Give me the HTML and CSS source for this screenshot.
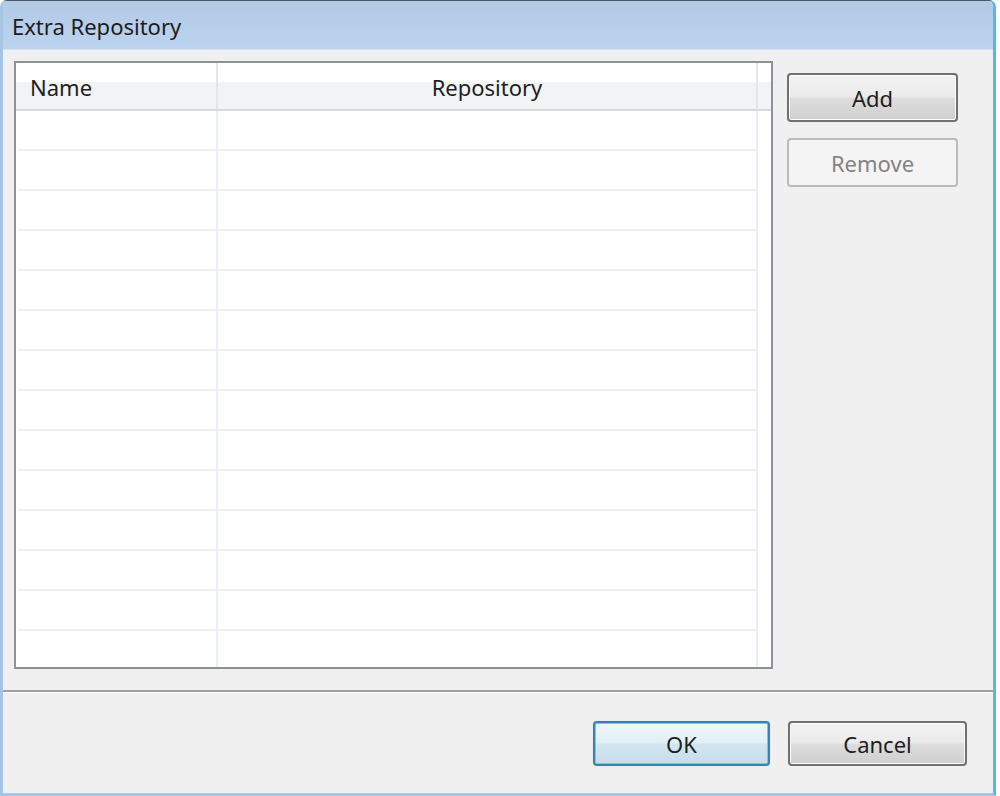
FILE: index.html
```html
<!DOCTYPE html>
<html>
<head>
<meta charset="utf-8">
<link rel="stylesheet" href="styles.css">
</head>
<body>
<div class="window">
  <div class="titlebar">Extra Repository</div>
  <div class="client">
    <div class="main">
      <div class="table">
        <div class="thead">
          <div class="th th-name">Name</div>
          <div class="th th-repo">Repository</div>
          <div class="th th-fill"></div>
        </div>
        <div class="tbody">
          <div class="row"><div class="td c1"></div><div class="td c2"></div><div class="td c3"></div></div>
          <div class="row"><div class="td c1"></div><div class="td c2"></div><div class="td c3"></div></div>
          <div class="row"><div class="td c1"></div><div class="td c2"></div><div class="td c3"></div></div>
          <div class="row"><div class="td c1"></div><div class="td c2"></div><div class="td c3"></div></div>
          <div class="row"><div class="td c1"></div><div class="td c2"></div><div class="td c3"></div></div>
          <div class="row"><div class="td c1"></div><div class="td c2"></div><div class="td c3"></div></div>
          <div class="row"><div class="td c1"></div><div class="td c2"></div><div class="td c3"></div></div>
          <div class="row"><div class="td c1"></div><div class="td c2"></div><div class="td c3"></div></div>
          <div class="row"><div class="td c1"></div><div class="td c2"></div><div class="td c3"></div></div>
          <div class="row"><div class="td c1"></div><div class="td c2"></div><div class="td c3"></div></div>
          <div class="row"><div class="td c1"></div><div class="td c2"></div><div class="td c3"></div></div>
          <div class="row"><div class="td c1"></div><div class="td c2"></div><div class="td c3"></div></div>
          <div class="row"><div class="td c1"></div><div class="td c2"></div><div class="td c3"></div></div>
          <div class="row last"><div class="td c1"></div><div class="td c2"></div><div class="td c3"></div></div>
        </div>
      </div>
      <div class="side">
        <button class="btn btn-side">Add</button>
        <button class="btn btn-side disabled">Remove</button>
      </div>
    </div>
    <div class="separator"></div>
    <div class="footer">
      <button class="btn btn-foot default">OK</button>
      <button class="btn btn-foot">Cancel</button>
    </div>
  </div>
</div>
</body>
</html>
```

FILE: styles.css
```css
html, body {
  margin: 0;
  padding: 0;
  background: #ffffff;
}
body {
  font-family: "Noto Sans", "Open Sans", sans-serif;
  color: #1e1e1e;
  width: 1000px;
  height: 796px;
  overflow: hidden;
}
.window {
  box-sizing: border-box;
  width: 996px;
  height: 796px;
  border-top: 1px solid #4a5866;
  border-left: 3px solid #a7c4e4;
  border-right: 3px solid #4cbce6;
  border-bottom: 3px solid #a7c4e4;
  border-radius: 7px 7px 0 0;
  display: flex;
  flex-direction: column;
  background: #f0f0f0;
  overflow: hidden;
}
.titlebar {
  height: 48px;
  flex: none;
  background: linear-gradient(#b2cae6, #bcd3ee);
  font-size: 22px;
  line-height: 50px;
  padding-left: 9px;
  color: #1c1c1c;
  border-bottom: 1px solid #d6e2ef;
}
.client {
  flex: 1;
  display: flex;
  flex-direction: column;
  background: #f0f0f0;
}
.main {
  display: flex;
  padding: 11px 0 0 11px;
  gap: 14px;
}
.table {
  box-sizing: border-box;
  width: 759px;
  height: 608px;
  border: 2px solid #8e9298;
  background: #ffffff;
  display: flex;
  flex-direction: column;
  overflow: hidden;
}
.thead {
  display: flex;
  height: 46px;
  flex: none;
  background: linear-gradient(#ffffff 0, #ffffff 42%, #f2f3f5 42%, #f2f3f5 100%);
  border-bottom: 2px solid #d8d9db;
}
.th {
  font-size: 22px;
  line-height: 48px;
  box-sizing: border-box;
}
.th-name {
  width: 202px;
  padding-left: 14px;
  border-right: 2px solid #e4e5e7;
}
.th-repo {
  width: 540px;
  text-align: center;
  border-right: 2px solid #e4e5e7;
}
.th-fill {
  flex: 1;
}
.tbody {
  flex: 1;
  display: flex;
  flex-direction: column;
}
.row {
  display: flex;
  height: 40px;
  flex: none;
}
.td {
  box-sizing: border-box;
  height: 40px;
  border-bottom: 2px solid #f0f0f0;
}
.c1 {
  border-right: 2px solid #e8eef8;
  margin-left: 2px;
  width: 200px;
}
.c2 {
  width: 540px;
  border-right: 2px solid #e8eef8;
}
.c3 {
  flex: 1;
  border-bottom: none;
}
.row.last .td {
  border-bottom: none;
}
.side {
  display: flex;
  flex-direction: column;
  padding-top: 12px;
  gap: 16px;
}
.btn {
  box-sizing: border-box;
  font-family: "Noto Sans", "Open Sans", sans-serif;
  font-size: 22px;
  color: #1e1e1e;
  border: 2px solid #707070;
  border-radius: 4px;
  background: linear-gradient(#f2f2f2 0, #ebebeb 48%, #dddddd 52%, #cfcfcf 100%);
  box-shadow: inset 0 0 0 1px #fcfcfc;
  padding: 0;
  margin: 0;
}
.btn-side {
  width: 171px;
  height: 49px;
}
.btn.disabled {
  border-color: #b8bcbf;
  background: #f4f4f4;
  color: #838383;
  box-shadow: none;
}
.separator {
  margin-top: 21px;
  height: 2px;
  background: #a0a0a0;
  border-bottom: 1px solid #ffffff;
}
.footer {
  display: flex;
  justify-content: flex-end;
  gap: 18px;
  padding: 28px 26px 0 0;
}
.btn-foot {
  width: 179px;
  height: 45px;
}
.btn.default {
  width: 177px;
  border-color: #3c7fb1;
  background: linear-gradient(#eef6fb 0, #e2eff7 48%, #d2e6f1 52%, #c6dde9 100%);
  box-shadow: inset 0 0 0 1px #5fd3f5, 0 0 1px #5fd3f5;
}
```
